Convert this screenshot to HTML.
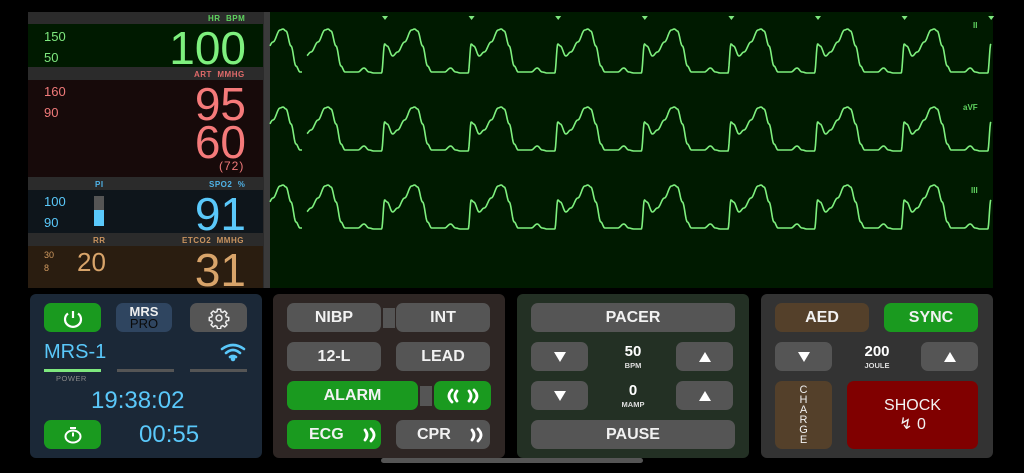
<!DOCTYPE html>
<html><head><meta charset="utf-8">
<style>
*{margin:0;padding:0;box-sizing:border-box}
body{width:1024px;height:473px;background:#000;position:relative;overflow:hidden;font-family:"Liberation Sans",sans-serif;color:#fff}
.a{position:absolute}
.lbl{position:absolute;font-size:8px;font-weight:bold;letter-spacing:.5px}
.btn{position:absolute;border-radius:7px;background:#555;display:flex;align-items:center;justify-content:center;font-size:16px;font-weight:bold;color:#f2f2f2}
.g{background:#1a9a1f}
.big{position:absolute;right:778px;font-size:46px;line-height:44px;text-align:right}
</style></head><body>
<div class="a" style="left:28px;top:12px;width:242px;height:276px;background:#2b2b2b"></div>
<div class="a" style="left:264px;top:12px;width:6px;height:276px;background:#3a3a3a"></div>
<div class="a" style="left:28px;top:24px;width:235px;height:43px;background:#001a00"></div>
<div class="a" style="left:28px;top:80px;width:235px;height:97px;background:#170a0a"></div>
<div class="a" style="left:28px;top:190px;width:235px;height:43px;background:#0e151b"></div>
<div class="a" style="left:28px;top:246px;width:235px;height:42px;background:#2a1d10"></div>

<div class="lbl" style="left:208px;top:14px;color:#5fd35f">HR&nbsp; BPM</div>
<div class="a" style="left:44px;top:29px;font-size:13px;color:#7ee87e">150</div>
<div class="a" style="left:44px;top:50px;font-size:13px;color:#7ee87e">50</div>
<div class="big" style="top:26px;color:#7ef07e">100</div>

<div class="lbl" style="left:194px;top:70px;color:#e06a6a">ART&nbsp; MMHG</div>
<div class="a" style="left:44px;top:84px;font-size:13px;color:#f07a7a">160</div>
<div class="a" style="left:44px;top:105px;font-size:13px;color:#f07a7a">90</div>
<div class="big" style="top:82px;color:#f57a7a">95</div>
<div class="big" style="top:120px;color:#f57a7a">60</div>
<div class="a" style="left:219px;top:159px;font-size:12px;letter-spacing:1px;color:#f07a7a">(72)</div>

<div class="lbl" style="left:95px;top:180px;color:#4fb3e8">PI</div>
<div class="lbl" style="left:209px;top:180px;color:#4fb3e8">SPO2&nbsp; %</div>
<div class="a" style="left:44px;top:194px;font-size:13px;color:#5ac8fa">100</div>
<div class="a" style="left:44px;top:215px;font-size:13px;color:#5ac8fa">90</div>
<div class="a" style="left:94px;top:196px;width:10px;height:14px;background:#555"></div>
<div class="a" style="left:94px;top:210px;width:10px;height:16px;background:#5ac8fa"></div>
<div class="big" style="top:192px;color:#5ac8fa">91</div>

<div class="lbl" style="left:93px;top:236px;color:#c8935f">RR</div>
<div class="lbl" style="left:182px;top:236px;color:#c8935f">ETCO2&nbsp; MMHG</div>
<div class="a" style="left:44px;top:250px;font-size:9px;color:#d09a60">30</div>
<div class="a" style="left:44px;top:263px;font-size:9px;color:#d09a60">8</div>
<div class="a" style="left:77px;top:247px;font-size:26px;color:#d8a46a">20</div>
<div class="big" style="top:248px;color:#d8a46a">31</div>

<svg class="a" style="left:0;top:0" width="1024" height="300">
<rect x="270" y="12" width="723" height="276" fill="#001a00"/>
<g id="mk" fill="#7ee87e"></g>
<g id="wv" fill="none" stroke="#7ef07e" stroke-width="1.6" stroke-linejoin="round"></g>
<text x="973" y="28" font-size="8" fill="#5fd35f" font-family="Liberation Sans" font-weight="bold">II</text>
<text x="963" y="110" font-size="8" fill="#5fd35f" font-family="Liberation Sans" font-weight="bold">aVF</text>
<text x="971" y="193" font-size="8" fill="#5fd35f" font-family="Liberation Sans" font-weight="bold">III</text>
</svg>
<script>
(function(){
var P=86.6;
var k=[[-3,73],[0,44],[2.5,46],[8,56],[13,52],[20,42],[27,30],[30,29],[33,31],[38,46],[43,66],[47,72],[60,72],[66,68],[71,72],[76,73],[P-3,73]];
function y(t){t=((t%P)+P)%P;if(t>P-3){t=t-P}
for(var i=1;i<k.length;i++){if(t<=k[i][0]){var a=k[i-1],b=k[i];var u=(t-a[0])/(b[0]-a[0]);u=(1-Math.cos(u*Math.PI))/2;return a[1]+(b[1]-a[1])*u}}return 73}
var wv=document.getElementById('wv'),mk=document.getElementById('mk');var s='';
[0,78,156].forEach(function(o){
 var d='';var x;
 for(x=270;x<=302;x+=0.5){d+=(x==270?'M':'L')+x+' '+(y(x-253)+o).toFixed(1)}
 for(x=307;x<=991;x+=0.5){d+=(x==307?'M':'L')+x+' '+(y(x-298)+o).toFixed(1)}
 s+='<path d="'+d+'"/>';
});
wv.innerHTML=s;
var m='';for(var i=0;i<8;i++){var cx=385+i*86.6;if(cx>992)cx=990;m+='<polygon points="'+(cx-3)+',16 '+(cx+3)+',16 '+cx+',20"/>'}
mk.innerHTML=m;
})();
</script>

<div class="a" style="left:30px;top:294px;width:232px;height:164px;background:#1b2837;border-radius:6px"></div>
<div class="a" style="left:273px;top:294px;width:232px;height:164px;background:#2e2624;border-radius:6px"></div>
<div class="a" style="left:517px;top:294px;width:232px;height:164px;background:#233024;border-radius:6px"></div>
<div class="a" style="left:761px;top:294px;width:232px;height:164px;background:#333;border-radius:6px"></div>
<div class="a" style="left:381px;top:458px;width:262px;height:5px;background:#555;border-radius:3px"></div>

<div class="btn g" style="left:44px;top:303px;width:57px;height:29px">
<svg width="26" height="20" viewBox="0 0 26 20"><path d="M8 5.5 A8 7.5 0 1 0 18 5.5" fill="none" stroke="#fff" stroke-width="2.2"/><line x1="13" y1="3" x2="13" y2="10" stroke="#fff" stroke-width="2.2"/></svg></div>
<div class="btn" style="left:116px;top:303px;width:56px;height:29px;background:#2f4560;flex-direction:column;line-height:12px">
<span style="font-size:13px;font-weight:900;color:#eee">MRS</span><span style="font-size:13px;font-weight:normal;color:#0a0a0a">PRO</span></div>
<div class="btn" style="left:190px;top:303px;width:57px;height:29px">
<svg width="22" height="22" viewBox="0 0 24 24" fill="none" stroke="#eee" stroke-width="1.6"><circle cx="12" cy="12" r="3.2"/><path d="M10.3 2.5h3.4l.5 2.6 1.9.8 2.2-1.5 2.4 2.4-1.5 2.2.8 1.9 2.6.5v3.4l-2.6.5-.8 1.9 1.5 2.2-2.4 2.4-2.2-1.5-1.9.8-.5 2.6h-3.4l-.5-2.6-1.9-.8-2.200 1.5-2.4-2.4 1.5-2.2-.8-1.9-2.6-.5v-3.4l2.6-.5.8-1.9-1.5-2.2 2.4-2.4 2.2 1.5 1.9-.8z"/></svg></div>
<div class="a" style="left:44px;top:341px;font-size:20px;color:#5ac8fa">MRS-1</div>
<svg class="a" style="left:219px;top:342px" width="28" height="20" viewBox="0 0 28 20" fill="none" stroke="#5ac8fa" stroke-width="2.6" stroke-linecap="round"><path d="M3 7 Q14 -1 25 7"/><path d="M7 11 Q14 5 21 11"/><path d="M11 15 Q14 13 17 15"/><circle cx="14" cy="17" r="1" fill="#5ac8fa"/></svg>
<div class="a" style="left:44px;top:369px;width:57px;height:3px;background:#7ee87e"></div>
<div class="a" style="left:117px;top:369px;width:57px;height:3px;background:#555"></div>
<div class="a" style="left:190px;top:369px;width:57px;height:3px;background:#555"></div>
<div class="a" style="left:56px;top:374px;font-size:7.5px;color:#888;letter-spacing:.5px">POWER</div>
<div class="a" style="left:91px;top:387px;font-size:24px;color:#5ac8fa">19:38:02</div>
<div class="btn g" style="left:44px;top:420px;width:57px;height:29px">
<svg width="24" height="20" viewBox="0 0 24 20" fill="none" stroke="#fff" stroke-width="2"><ellipse cx="12" cy="11.5" rx="7.5" ry="6"/><line x1="12" y1="11.5" x2="12" y2="7.5"/><line x1="9" y1="3" x2="15" y2="3"/></svg></div>
<div class="a" style="left:139px;top:421px;font-size:24px;color:#5ac8fa">00:55</div>

<div class="btn" style="left:287px;top:303px;width:94px;height:29px">NIBP</div>
<div class="a" style="left:383px;top:308px;width:12px;height:20px;background:#555"></div>
<div class="btn" style="left:396px;top:303px;width:94px;height:29px">INT</div>
<div class="btn" style="left:287px;top:342px;width:94px;height:29px">12-L</div>
<div class="btn" style="left:396px;top:342px;width:94px;height:29px">LEAD</div>
<div class="btn g" style="left:287px;top:381px;width:131px;height:29px">ALARM</div>
<div class="a" style="left:420px;top:386px;width:12px;height:20px;background:#555"></div>
<div class="btn g" style="left:434px;top:381px;width:57px;height:29px">
<svg width="36" height="18" viewBox="0 0 36 18" fill="none" stroke="#fff" stroke-width="2.8" stroke-linecap="round"><path d="M7 3 Q1 9 7 15"/><path d="M12 4 Q8 9 12 14"/><path d="M24 4 Q28 9 24 14"/><path d="M29 3 Q35 9 29 15"/></svg></div>
<div class="btn g" style="left:287px;top:420px;width:94px;height:29px;justify-content:flex-start;padding-left:22px">ECG
<svg style="margin-left:18px" width="16" height="18" viewBox="0 0 16 18" fill="none" stroke="#fff" stroke-width="2.8" stroke-linecap="round"><path d="M3 4 Q7 9 3 14"/><path d="M9 3 Q15 9 9 15"/></svg></div>
<div class="btn" style="left:396px;top:420px;width:94px;height:29px;justify-content:flex-start;padding-left:21px">CPR
<svg style="margin-left:18px" width="16" height="18" viewBox="0 0 16 18" fill="none" stroke="#fff" stroke-width="2.8" stroke-linecap="round"><path d="M3 4 Q7 9 3 14"/><path d="M9 3 Q15 9 9 15"/></svg></div>

<div class="btn" style="left:531px;top:303px;width:204px;height:29px">PACER</div>
<div class="btn" style="left:531px;top:342px;width:57px;height:29px"><svg width="14" height="12"><polygon points="1,1 13,1 7,11" fill="#fff"/></svg></div>
<div class="btn" style="left:676px;top:342px;width:57px;height:29px"><svg width="14" height="12"><polygon points="1,11 13,11 7,1" fill="#fff"/></svg></div>
<div class="a" style="left:603px;top:343px;width:60px;text-align:center;font-size:15px;font-weight:bold">50</div>
<div class="a" style="left:603px;top:361px;width:60px;text-align:center;font-size:7.5px;font-weight:bold;color:#ddd">BPM</div>
<div class="btn" style="left:531px;top:381px;width:57px;height:29px"><svg width="14" height="12"><polygon points="1,1 13,1 7,11" fill="#fff"/></svg></div>
<div class="btn" style="left:676px;top:381px;width:57px;height:29px"><svg width="14" height="12"><polygon points="1,11 13,11 7,1" fill="#fff"/></svg></div>
<div class="a" style="left:603px;top:382px;width:60px;text-align:center;font-size:15px;font-weight:bold">0</div>
<div class="a" style="left:603px;top:400px;width:60px;text-align:center;font-size:7.5px;font-weight:bold;color:#ddd">MAMP</div>
<div class="btn" style="left:531px;top:420px;width:204px;height:29px">PAUSE</div>

<div class="btn" style="left:775px;top:303px;width:94px;height:29px;background:#54402a">AED</div>
<div class="btn g" style="left:884px;top:303px;width:94px;height:29px">SYNC</div>
<div class="btn" style="left:775px;top:342px;width:57px;height:29px"><svg width="14" height="12"><polygon points="1,1 13,1 7,11" fill="#fff"/></svg></div>
<div class="btn" style="left:921px;top:342px;width:57px;height:29px"><svg width="14" height="12"><polygon points="1,11 13,11 7,1" fill="#fff"/></svg></div>
<div class="a" style="left:847px;top:343px;width:60px;text-align:center;font-size:15px;font-weight:bold">200</div>
<div class="a" style="left:847px;top:361px;width:60px;text-align:center;font-size:7.5px;font-weight:bold;color:#ddd">JOULE</div>
<div class="btn" style="left:775px;top:381px;width:57px;height:68px;background:#54402a;flex-direction:column;font-size:11px;font-weight:normal;line-height:10px">
<span>C</span><span>H</span><span>A</span><span>R</span><span>G</span><span>E</span></div>
<div class="btn" style="left:847px;top:381px;width:131px;height:68px;background:#800000;flex-direction:column;font-weight:normal;font-size:16px;line-height:19px"><span>SHOCK</span><span>↯ 0</span></div>
</body></html>
